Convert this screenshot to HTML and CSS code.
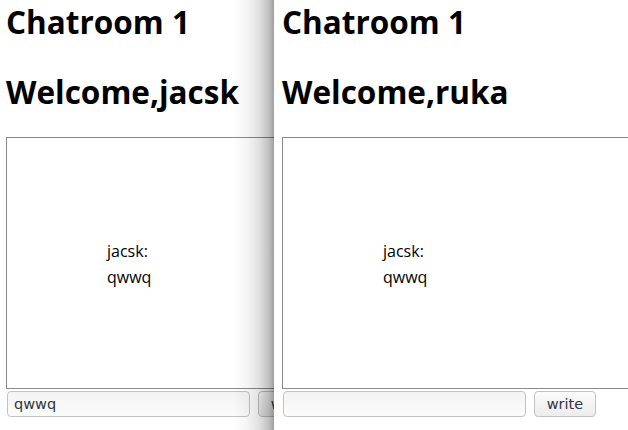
FILE: index.html
```html
<!DOCTYPE html>
<html>
<head>
<meta charset="utf-8">
<link rel="stylesheet" href="styles.css">
</head>
<body>
<div class="desktop">
  <div class="window window--back">
    <div class="page page--back">
      <h1 class="title">Chatroom 1</h1>
      <h1 class="title title--welcome">Welcome,jacsk</h1>
      <div class="chatbox">
        <div class="msg">jacsk:</div>
        <div class="msg">qwwq</div>
      </div>
      <div class="composer">
        <input class="field" type="text" value="qwwq">
        <button class="btn">write</button>
      </div>
    </div>
    <div class="shade"></div>
  </div>
  <div class="window window--front">
    <div class="page">
      <h1 class="title">Chatroom 1</h1>
      <h1 class="title title--welcome">Welcome,ruka</h1>
      <div class="chatbox">
        <div class="msg">jacsk:</div>
        <div class="msg">qwwq</div>
      </div>
      <div class="composer">
        <input class="field" type="text" value="">
        <button class="btn">write</button>
      </div>
    </div>
  </div>
</div>
</body>
</html>
```

FILE: styles.css
```css
html, body {
  margin: 0;
  padding: 0;
  background: #ffffff;
}

.desktop {
  display: flex;
  width: 628px;
  height: 430px;
  overflow: hidden;
}

.window {
  position: relative;
  height: 430px;
  overflow: hidden;
  background: #ffffff;
  flex: none;
}

.window--back {
  width: 274px;
}

.window--front {
  flex: 1;
}

.page {
  padding: 2px 0 0 8px;
  font-family: "Open Sans", "Noto Sans", sans-serif;
  color: #000;
}

.page--back {
  padding-left: 6px;
}

.title {
  margin: 0;
  font-size: 31.5px;
  line-height: 40px;
  font-weight: 700;
  white-space: nowrap;
}

.title--welcome {
  margin-top: 30px;
}

.chatbox {
  box-sizing: border-box;
  margin-top: 25px;
  width: 420px;
  height: 252px;
  border: 1px solid #8a8a8a;
  padding: 100px 0 0 100px;
  font-size: 16px;
  line-height: 26px;
}

.msg {
  white-space: nowrap;
}

.composer {
  display: flex;
  gap: 8px;
  margin: 2px 0 0 1px;
}

.field {
  box-sizing: border-box;
  width: 243px;
  height: 26px;
  margin: 0;
  padding: 0 6px;
  border: 1px solid #c3c3c3;
  border-radius: 4px;
  background: linear-gradient(#f4f4f4, #fbfbfb);
  font-family: "DejaVu Sans", sans-serif;
  font-size: 14.5px;
  color: #2f3440;
  flex: none;
}

.btn {
  box-sizing: border-box;
  width: 62px;
  height: 26px;
  margin: 0;
  padding: 0;
  border: 1px solid #c3c3c3;
  border-radius: 4px;
  background: linear-gradient(#fbfbfb, #ececec);
  font-family: "DejaVu Sans", sans-serif;
  font-size: 14.5px;
  color: #2f3440;
  flex: none;
}

.shade {
  position: absolute;
  top: 0;
  right: 0;
  width: 42px;
  height: 100%;
  background: linear-gradient(to right,
    rgba(0, 0, 0, 0) 0%,
    rgba(0, 0, 0, 0.04) 35%,
    rgba(0, 0, 0, 0.12) 65%,
    rgba(0, 0, 0, 0.25) 88%,
    rgba(0, 0, 0, 0.38) 100%);
  pointer-events: none;
}
```
